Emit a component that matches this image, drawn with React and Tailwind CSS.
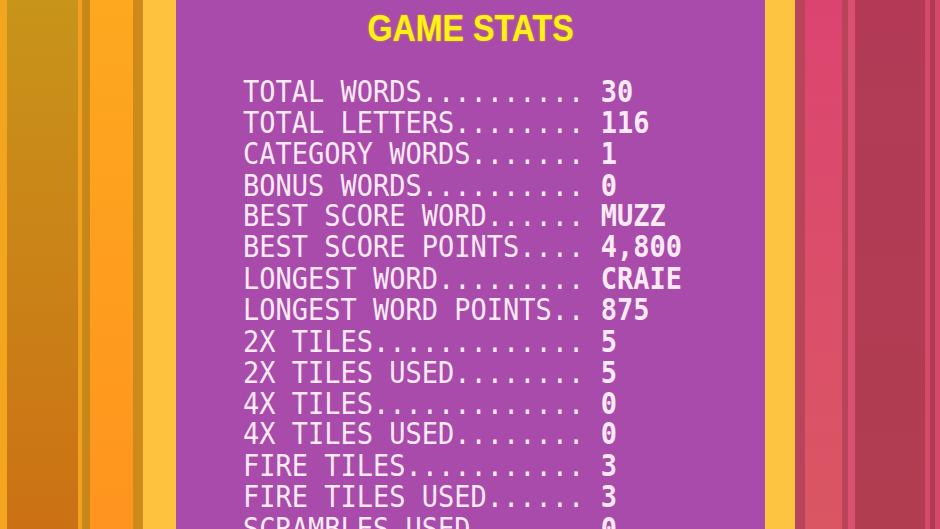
import React from 'react'

const stats = [
  ['TOTAL WORDS', '30'],
  ['TOTAL LETTERS', '116'],
  ['CATEGORY WORDS', '1'],
  ['BONUS WORDS', '0'],
  ['BEST SCORE WORD', 'MUZZ'],
  ['BEST SCORE POINTS', '4,800'],
  ['LONGEST WORD', 'CRAIE'],
  ['LONGEST WORD POINTS', '875'],
  ['2X TILES', '5'],
  ['2X TILES USED', '5'],
  ['4X TILES', '0'],
  ['4X TILES USED', '0'],
  ['FIRE TILES', '3'],
  ['FIRE TILES USED', '3'],
  ['SCRAMBLES USED', '0']
]

const StatRow = ({ label, value }) => (
  <div className="whitespace-pre">
    <span>{label.padEnd(21, '.') + ' '}</span>
    <span className="font-bold">{value}</span>
  </div>
)

const App = () => {
  return (
    <div className="w-[940px] h-[529px] flex overflow-hidden bg-[#a94baa]">
      {/* left stripes */}
      <div className="w-[7px] bg-[#f4a51e]"></div>
      <div className="w-[71px] bg-gradient-to-b from-[#c8941a] to-[#cb7114]"></div>
      <div className="w-[4px] bg-[#f2a020]"></div>
      <div className="w-[8px] bg-[#c88818]"></div>
      <div className="w-[43px] bg-gradient-to-b from-[#fda81f] to-[#ff941e]"></div>
      <div className="w-[10px] bg-[#cc8a1a]"></div>
      <div className="w-[33px] bg-[#fdc33f]"></div>

      {/* panel */}
      <div className="w-[589px] flex flex-col bg-[#a94baa]">
        <div className="pt-[10px] flex justify-center">
          <h1 className="inline-block scale-x-[0.87] text-[37px] leading-[37px] font-bold text-[#fff21a] font-['Liberation_Sans',Arial,sans-serif] [text-shadow:0_0_2px_#e8a400]">
            GAME STATS
          </h1>
        </div>
        <div className="mt-[29px] pl-[67px] origin-top scale-y-[1.12] text-[27px] leading-[27.86px] text-[#fdeaf6] font-['DejaVu_Sans_Mono',monospace]">
          {stats.map(([label, value]) => (
            <StatRow key={label} label={label} value={value} />
          ))}
        </div>
      </div>

      {/* right stripes */}
      <div className="w-[30px] bg-[#fdc441]"></div>
      <div className="w-[10px] bg-[#b8445a]"></div>
      <div className="w-[37px] bg-gradient-to-b from-[#dc4470] to-[#da5663]"></div>
      <div className="w-[6px] bg-[#b8445a]"></div>
      <div className="w-[7px] bg-[#d95070]"></div>
      <div className="w-[70px] bg-gradient-to-b from-[#b23a57] to-[#b03d50]"></div>
      <div className="w-[5px] bg-[#d54a6a]"></div>
      <div className="w-[5px] bg-[#b03a56]"></div>
      <div className="flex-1 bg-[#d4496a]"></div>
    </div>
  )
}

export default App
